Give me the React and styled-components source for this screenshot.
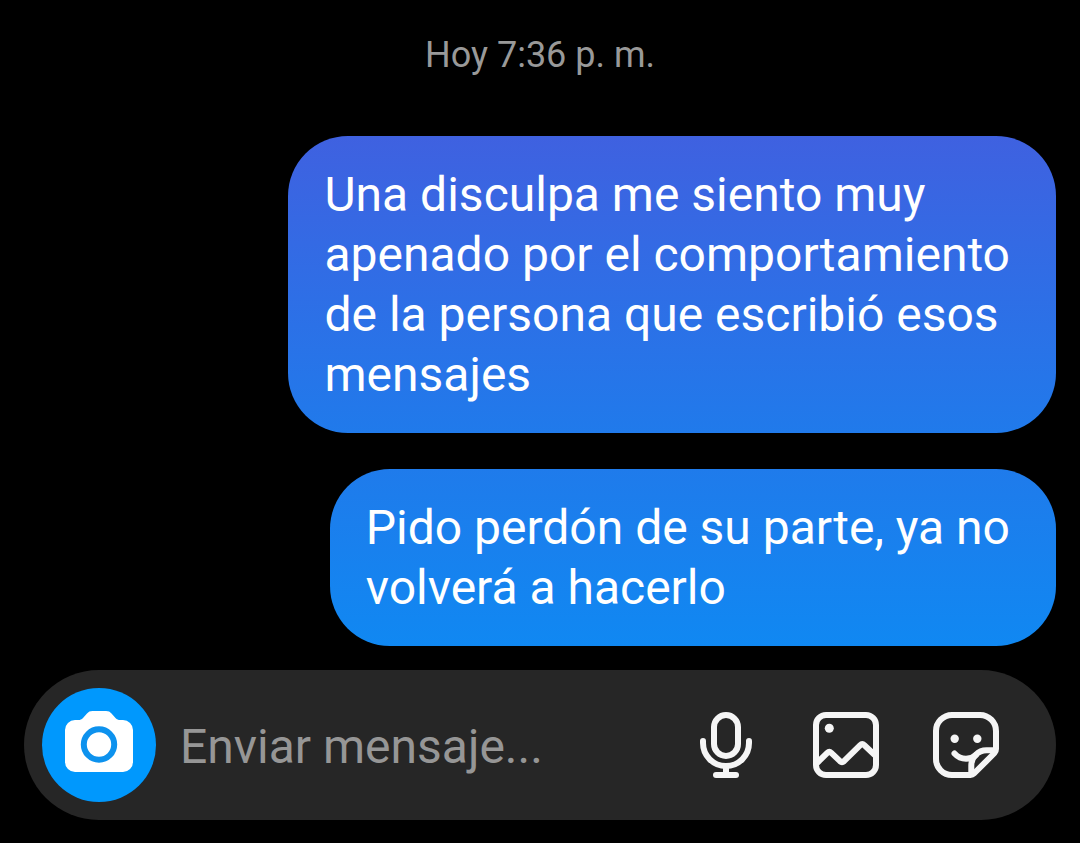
import { useState } from "react";
import styled, { createGlobalStyle } from "styled-components";

const GlobalStyle = createGlobalStyle`
  * {
    box-sizing: border-box;
  }
  body {
    margin: 0;
    background: #000000;
    font-family: Roboto, "Liberation Sans", sans-serif;
  }
`;
const Container = styled.div`
  display: flex;
  flex-direction: column;
  min-height: 100vh;
`;
const ChatDiv = styled.main`
  display: flex;
  flex-direction: column;
  padding: 32px 24px 24px;
`;
const TimeText = styled.time`
  align-self: center;
  font-size: 36px;
  line-height: 46px;
  color: #999999;
  margin-bottom: 58px;
`;
const MessageList = styled.div`
  display: flex;
  flex-direction: column;
  align-items: flex-end;
  gap: 36px;
`;
const Message = styled.p`
  margin: 0;
  padding: 29px 46px 28px 36px;
  border-radius: 60px;
  font-size: 48px;
  line-height: 60px;
  color: #ffffff;
  white-space: pre-line;
  background: linear-gradient(${(props) => props.$from}, ${(props) => props.$to});
`;
const InputBar = styled.form`
  display: flex;
  align-items: center;
  gap: 24px;
  margin: 0 24px 23px;
  padding: 18px 54px 18px 18px;
  border-radius: 75px;
  background: #262626;
`;
const IconButton = styled.button`
  display: flex;
  flex: none;
  padding: 0;
  border: none;
  background: none;
  color: #f5f5f5;
  cursor: pointer;
`;
const CameraButton = styled(IconButton)`
  border-radius: 50%;
  background: #0098fd;
  color: #ffffff;
`;
const MessageInput = styled.input`
  flex: 1;
  min-width: 0;
  height: 60px;
  padding: 2px 0 0;
  border: none;
  outline: none;
  background: none;
  font-family: inherit;
  font-size: 48px;
  color: #ffffff;
  &::placeholder {
    color: #969696;
    opacity: 1;
  }
`;
const Actions = styled.div`
  display: flex;
  gap: 48px;
`;

const messages = [
  {
    id: 1,
    text: "Una disculpa me siento muy\napenado por el comportamiento\nde la persona que escribió esos\nmensajes",
    from: "#3f61e0",
    to: "#207aeb",
  },
  {
    id: 2,
    text: "Pido perdón de su parte, ya no\nvolverá a hacerlo",
    from: "#1f7beb",
    to: "#1088f2",
  },
];

const CameraIcon = () => (
  <svg width="114" height="114" viewBox="0 0 114 114" aria-hidden="true">
    <path
      fill="currentColor"
      d="M50.5 23H64C66.5 23 68 23.8 69.500 25.500L73.500 30C75 31.600 76 32 78.500 32H81A10 10 0 0 1 91 42V74A10 10 0 0 1 81 84H33A10 10 0 0 1 23 74V42A10 10 0 0 1 33 32H36C38.500 32 39.500 31.600 41 30L45 25.500C46.500 23.800 48 23 50.500 23Z"
    />
    <circle cx="57" cy="56.5" r="15.2" fill="none" stroke="#0d92ee" strokeWidth="6" />
  </svg>
);

const LineIcon = ({ children }) => (
  <svg
    width="72"
    height="72"
    viewBox="0 0 72 72"
    fill="none"
    stroke="currentColor"
    strokeWidth="6"
    strokeLinecap="round"
    strokeLinejoin="round"
    aria-hidden="true"
  >
    {children}
  </svg>
);

const MicIcon = () => (
  <LineIcon>
    <rect x="24" y="6" width="24" height="41" rx="12" />
    <path d="M13 32V34A23 23 0 0 0 59 34V32" />
    <path d="M36 57V66" />
    <path d="M26 66H46" />
  </LineIcon>
);

const GalleryIcon = () => (
  <LineIcon>
    <rect x="6" y="6" width="60" height="60" rx="10" />
    <circle cx="19.3" cy="19.3" r="4.5" fill="currentColor" stroke="none" />
    <path d="M7.5 53.5L17.3 43.9Q19.3 42 21.3 43.9L30 52.2Q32 54 34 52.2L50 36.3Q52.2 34.2 54.4 36.2L64.5 45.7" />
  </LineIcon>
);

const StickerIcon = () => (
  <LineIcon>
    <path d="M66 40V22A16 16 0 0 0 50 6H22A16 16 0 0 0 6 22V50A16 16 0 0 0 22 66H40.5Q42.5 66 44 64.5L64.5 44Q66 42.5 66 40Z" />
    <path d="M65 41.3H56.5A15.2 15.2 0 0 0 41.3 56.5V65" />
    <path d="M24.5 44.5C28 48.3 32 49.8 36 49.8C39.5 49.8 43 48.7 46 46" />
    <circle cx="24.7" cy="29.7" r="4.2" fill="currentColor" stroke="none" />
    <circle cx="47.3" cy="29.7" r="4.2" fill="currentColor" stroke="none" />
  </LineIcon>
);

function MessageBar() {
  const [text, setText] = useState("");
  return (
    <InputBar
      onSubmit={(e) => {
        e.preventDefault();
        setText("");
      }}
    >
      <CameraButton type="button" aria-label="Cámara">
        <CameraIcon />
      </CameraButton>
      <MessageInput
        aria-label="Enviar mensaje"
        placeholder="Enviar mensaje..."
        value={text}
        onChange={(e) => setText(e.target.value)}
      />
      <Actions>
        <IconButton type="button" aria-label="Mensaje de voz">
          <MicIcon />
        </IconButton>
        <IconButton type="button" aria-label="Galería">
          <GalleryIcon />
        </IconButton>
        <IconButton type="button" aria-label="Stickers">
          <StickerIcon />
        </IconButton>
      </Actions>
    </InputBar>
  );
}

function App() {
  return (
    <Container>
      <GlobalStyle />
      <ChatDiv>
        <TimeText>Hoy 7:36 p. m.</TimeText>
        <MessageList>
          {messages.map((message) => (
            <Message key={message.id} $from={message.from} $to={message.to}>
              {message.text}
            </Message>
          ))}
        </MessageList>
      </ChatDiv>
      <MessageBar />
    </Container>
  );
}

export default App;
